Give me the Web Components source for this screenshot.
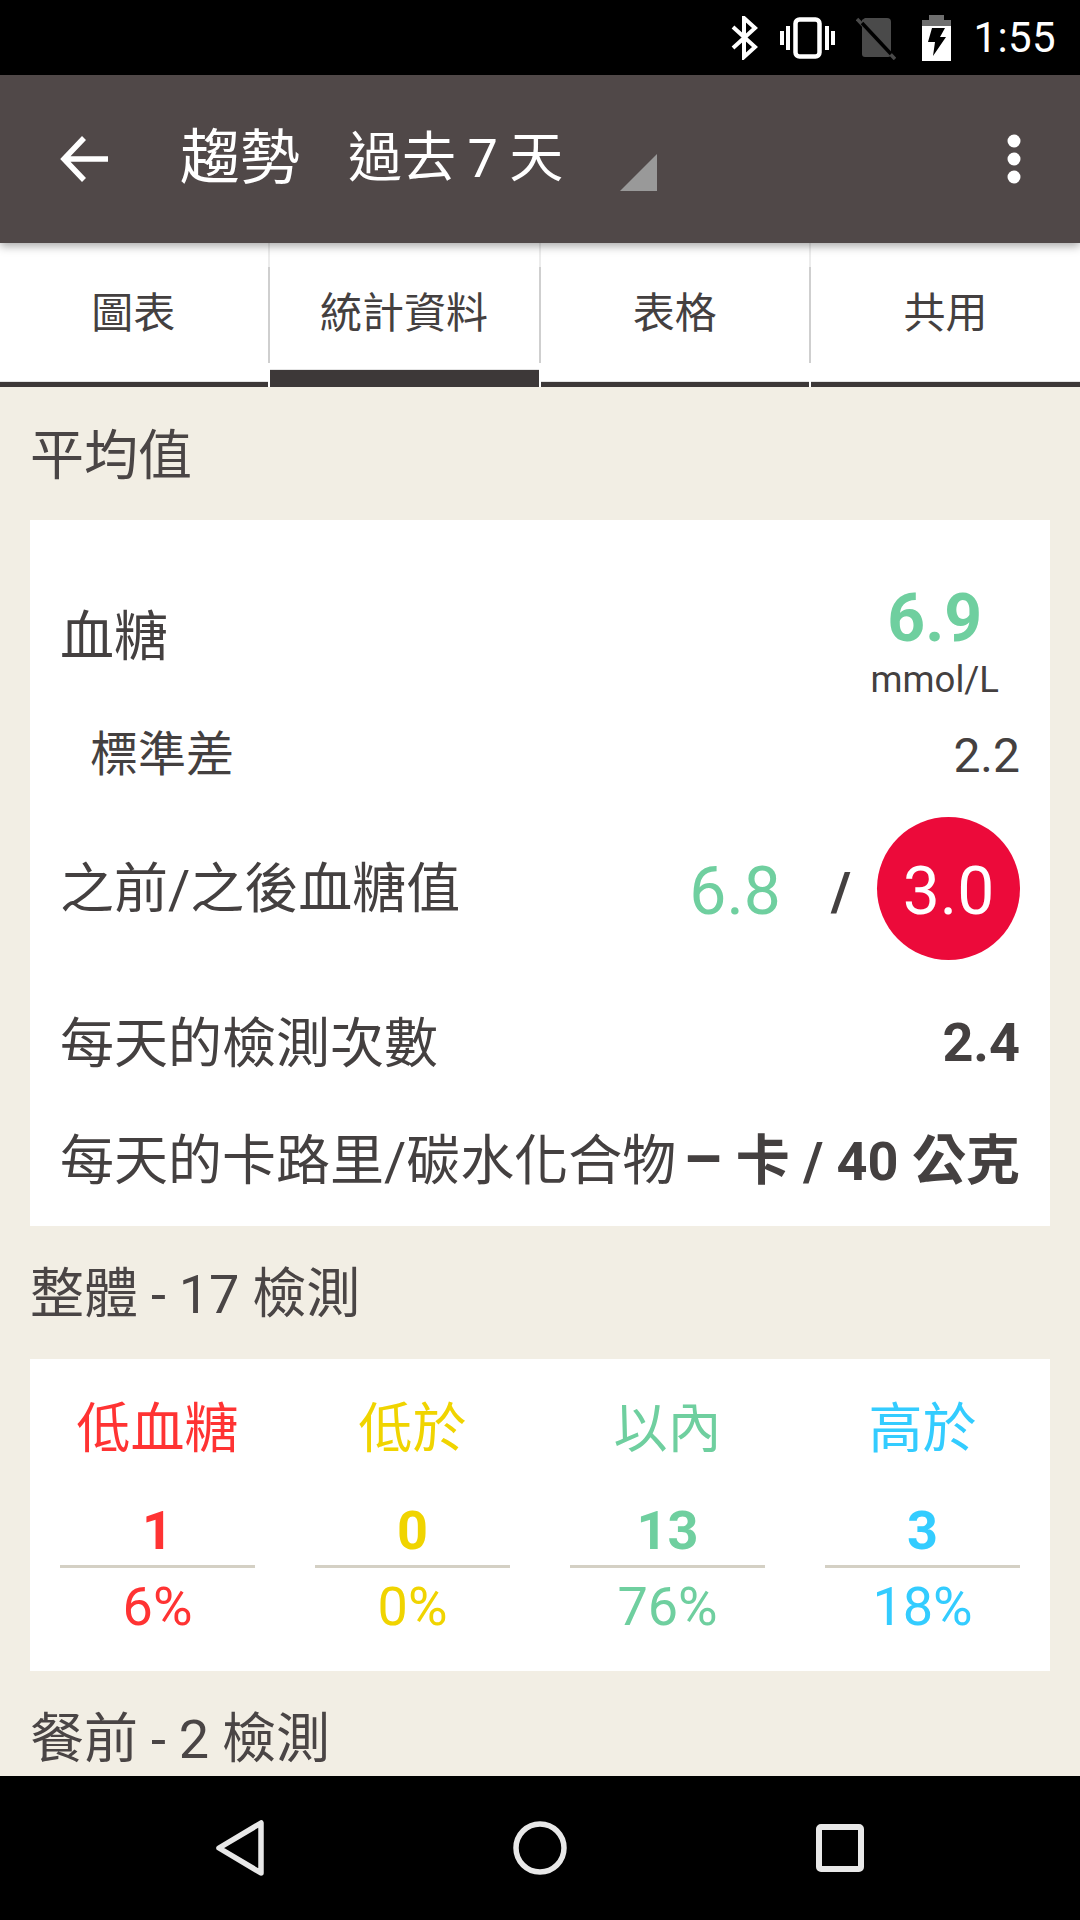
<!DOCTYPE html>
<html>
<head>
<meta charset="utf-8">
<style>
  html, body { margin: 0; padding: 0; }
  body {
    width: 1080px;
    height: 1920px;
    overflow: hidden;
    display: flex;
    flex-direction: column;
    background: #f2eee4;
    color: #444040;
    font-family: Roboto, "Noto Sans CJK TC", sans-serif;
  }
  main { flex: 1; min-height: 0; overflow: hidden; }
</style>
</head>
<body>
<status-bar time="1:55"></status-bar>
<app-toolbar title="趨勢" range="過去 7 天"></app-toolbar>
<tab-strip>
  <tab-item>圖表</tab-item>
  <tab-item active>統計資料</tab-item>
  <tab-item>表格</tab-item>
  <tab-item last>共用</tab-item>
</tab-strip>
<main>
  <section-title large>平均值</section-title>
  <average-card></average-card>
  <section-title>整體 - 17 檢測</section-title>
  <range-card>
    <range-cell color="#ff3333" label="低血糖" count="1" percent="6%"></range-cell>
    <range-cell color="#f0d400" label="低於" count="0" percent="0%"></range-cell>
    <range-cell color="#6fcf9f" label="以內" count="13" percent="76%"></range-cell>
    <range-cell color="#33ccff" label="高於" count="3" percent="18%"></range-cell>
  </range-card>
  <section-title>餐前 - 2 檢測</section-title>
</main>
<nav-bar></nav-bar>

<script>
class StatusBar extends HTMLElement {
  connectedCallback() {
    const shadow = this.attachShadow({ mode: 'open' });
    shadow.innerHTML = `
      <style>
        :host {
          display: flex;
          height: 75px;
          flex: none;
          background: #000;
          color: #fff;
          align-items: center;
          justify-content: flex-end;
          padding-right: 24px;
        }
        svg { display: block; }
        .time { font-size: 42px; line-height: 75px; margin-left: 21px; letter-spacing: 0.4px; }
      </style>
      <svg width="30" height="44" viewBox="0 0 30 44" style="margin-right:20px">
        <path d="M3 11 L25 31 L14 41 V2 L25 12 L3 32" fill="none" stroke="#fff" stroke-width="4"/>
      </svg>
      <svg width="56" height="42" viewBox="0 0 56 42" style="margin-right:20px">
        <rect x="15.5" y="2.5" width="24" height="37" rx="4" fill="none" stroke="#fff" stroke-width="4.5"/>
        <rect x="0" y="14" width="4" height="14" fill="#fff"/>
        <rect x="6" y="9" width="4" height="24" fill="#fff"/>
        <rect x="45" y="9" width="4" height="24" fill="#fff"/>
        <rect x="51" y="14" width="4" height="14" fill="#fff"/>
      </svg>
      <svg width="40" height="44" viewBox="0 0 40 44" style="margin-right:26px">
        <path d="M6 4 L9 2 H31 Q35 2 35 6 V38 Q35 41 32 41 H9 Q6 41 6 38 Z" fill="#4a4a4a"/>
        <path d="M1 3 L39 43" stroke="#4a4a4a" stroke-width="3.5"/>
        <path d="M6 7 L35 38" stroke="#000" stroke-width="3.5"/>
      </svg>
      <svg width="30" height="46" viewBox="0 0 30 46">
        <path d="M7 0 H22 V5 H29 V11 H0 V5 H7 Z" fill="#6f6f6f"/>
        <rect x="0" y="11" width="29" height="35" fill="#fff"/>
        <path d="M10 13 H23 L18 22 H24 L11 41 L13 27 H6 Z" fill="#000"/>
      </svg>
      <span class="time">${this.getAttribute('time')}</span>
    `;
  }
}
customElements.define('status-bar', StatusBar);

class AppToolbar extends HTMLElement {
  connectedCallback() {
    const shadow = this.attachShadow({ mode: 'open' });
    shadow.innerHTML = `
      <style>
        :host {
          display: flex;
          position: relative;
          z-index: 2;
          flex: none;
          height: 168px;
          background: #504848;
          color: #fff;
          align-items: center;
          box-shadow: 0 3px 9px rgba(0,0,0,.35);
        }
        .back { margin-left: 60px; display: block; }
        .title { font-size: 60px; margin-left: 70px; line-height: 170px; }
        .range { font-size: 54px; margin-left: 48px; line-height: 170px; word-spacing: -2px; }
        .arrow { margin-left: 57px; margin-top: 26px; display: block; }
        .more { margin-left: auto; margin-right: 59px; display: block; }
      </style>
      <svg class="back" width="50" height="48" viewBox="0 0 50 48">
        <path d="M48 24 H5 M24 3 L4 24 L24 45" fill="none" stroke="#fff" stroke-width="5.5"/>
      </svg>
      <span class="title">${this.getAttribute('title')}</span>
      <span class="range">${this.getAttribute('range')}</span>
      <svg class="arrow" width="37" height="37" viewBox="0 0 37 37"><path d="M37 0 V37 H0 Z" fill="#999"/></svg>
      <svg class="more" width="14" height="50" viewBox="0 0 14 50">
        <circle cx="7" cy="7" r="6.5" fill="#fff"/><circle cx="7" cy="25" r="6.5" fill="#fff"/><circle cx="7" cy="43" r="6.5" fill="#fff"/>
      </svg>
    `;
  }
}
customElements.define('app-toolbar', AppToolbar);

class TabStrip extends HTMLElement {
  constructor() {
    super();
    const shadow = this.attachShadow({ mode: 'open' });
    shadow.innerHTML = `
      <style>
        :host { display: flex; flex: none; height: 144px; width: 1081px; margin-left: -1px; background: #fff; }
      </style>
      <slot></slot>
    `;
  }
}
customElements.define('tab-strip', TabStrip);

class TabItem extends HTMLElement {
  constructor() {
    super();
    const shadow = this.attachShadow({ mode: 'open' });
    shadow.innerHTML = `
      <style>
        :host {
          display: block;
          position: relative;
          flex: 1;
          min-width: 0;
          box-sizing: border-box;
          border-right: 2px solid #fff;
          font-size: 42px;
          color: #444040;
        }
        :host([last]) { border-right: 0; }
        .body {
          height: 100%;
          box-sizing: border-box;
          display: flex;
          align-items: center;
          justify-content: center;
          padding-bottom: 11px;
        }
        .rule { position: absolute; right: -2px; width: 2px; }
        .rule.faint { top: 0; height: 24px; background: #ececec; }
        .rule.main { top: 24px; height: 96px; background: #cfcfcf; }
        :host([last]) .rule { display: none; }
        .bar {
          position: absolute;
          left: 0;
          right: 0;
          bottom: 0;
          height: 5px;
          background: #3d3838;
          border-top: 1px solid #e4e4e4;
        }
        :host([active]) .bar { height: 17px; }
      </style>
      <div class="body"><slot></slot></div>
      <div class="rule faint"></div>
      <div class="rule main"></div>
      <div class="bar"></div>
    `;
  }
}
customElements.define('tab-item', TabItem);

class SectionTitle extends HTMLElement {
  constructor() {
    super();
    const shadow = this.attachShadow({ mode: 'open' });
    shadow.innerHTML = `
      <style>
        :host {
          display: block;
          height: 133px;
          padding-left: 30px;
          font-size: 54px;
          line-height: 137px;
          word-spacing: -0.5px;
          color: #4a4545;
        }
        :host([large]) { line-height: 140px; }
      </style>
      <slot></slot>
    `;
  }
}
customElements.define('section-title', SectionTitle);

class StatRow extends HTMLElement {
  constructor() {
    super();
    const shadow = this.attachShadow({ mode: 'open' });
    shadow.innerHTML = `
      <style>
        :host {
          display: flex;
          align-items: center;
          justify-content: space-between;
          font-size: 54px;
          white-space: nowrap;
        }
      </style>
      <slot></slot>
    `;
  }
}
customElements.define('stat-row', StatRow);

class AverageCard extends HTMLElement {
  connectedCallback() {
    const shadow = this.attachShadow({ mode: 'open' });
    shadow.innerHTML = `
      <style>
        :host {
          display: block;
          margin: 0 30px;
          height: 706px;
          box-sizing: border-box;
          padding: 0 30px;
          background: #fff;
          color: #444040;
        }
        .glucose { height: 196px; padding-top: 29px; box-sizing: border-box; }
        .glucose-value { display: flex; flex-direction: column; align-items: center; margin: 16px 21px 0 0; }
        .big { font-size: 66px; font-weight: 700; color: #6fcf9f; line-height: 78px; }
        .unit { font-size: 36.5px; line-height: 44px; }
        .dev { height: 76px; padding-left: 30px; font-size: 48px; }
        .dev span { margin-bottom: 8px; }
        .dev b { font-weight: 400; font-size: 48px; margin-top: 3px; }
        .prepost { height: 193px; }
        .prepost > span:first-child { margin-bottom: 8px; }
        .pair { display: flex; align-items: center; font-size: 66px; }
        .before { color: #6fcf9f; padding-top: 6px; }
        .slash { font-weight: 700; font-size: 54px; margin: 0 26px 0 50px; padding-top: 6px; }
        .circle {
          width: 143px;
          height: 143px;
          box-sizing: border-box;
          padding-top: 6px;
          border-radius: 50%;
          background: #ec0a3a;
          color: #fff;
          display: flex;
          align-items: center;
          justify-content: center;
        }
        .count { height: 113px; }
        .count > span { margin-bottom: 4px; }
        .count b { margin-top: 2px; }
        .count b, .carbs b { font-size: 54px; font-weight: 700; }
        .carbs { height: 116px; }
        .dash { font-size: 62px; }
      </style>
      <stat-row class="glucose">
        <span>血糖</span>
        <span class="glucose-value"><span class="big">6.9</span><span class="unit">mmol/L</span></span>
      </stat-row>
      <stat-row class="dev"><span>標準差</span><b>2.2</b></stat-row>
      <stat-row class="prepost">
        <span>之前/之後血糖值</span>
        <span class="pair"><span class="before">6.8</span><span class="slash">/</span><span class="circle">3.0</span></span>
      </stat-row>
      <stat-row class="count"><span>每天的檢測次數</span><b>2.4</b></stat-row>
      <stat-row class="carbs"><span>每天的卡路里/碳水化合物</span><b><span class="dash">–</span> 卡 / 40 公克</b></stat-row>
    `;
  }
}
customElements.define('average-card', AverageCard);

class RangeCard extends HTMLElement {
  constructor() {
    super();
    const shadow = this.attachShadow({ mode: 'open' });
    shadow.innerHTML = `
      <style>
        :host {
          display: grid;
          grid-template-columns: repeat(4, 195px);
          column-gap: 60px;
          margin: 0 30px;
          height: 312px;
          box-sizing: border-box;
          padding: 0 30px;
          background: #fff;
        }
      </style>
      <slot></slot>
    `;
  }
}
customElements.define('range-card', RangeCard);

class RangeCell extends HTMLElement {
  connectedCallback() {
    const shadow = this.attachShadow({ mode: 'open' });
    shadow.innerHTML = `
      <style>
        :host {
          display: block;
          text-align: center;
          color: ${this.getAttribute('color')};
          font-size: 54px;
        }
        .label { line-height: 66px; padding-top: 38px; }
        .count { font-weight: 700; line-height: 64px; margin-top: 36px; }
        .line { height: 3px; background: #d4d0c4; margin-top: 2px; }
        .percent { line-height: 64px; margin-top: 7px; }
      </style>
      <div class="label">${this.getAttribute('label')}</div>
      <div class="count">${this.getAttribute('count')}</div>
      <div class="line"></div>
      <div class="percent">${this.getAttribute('percent')}</div>
    `;
  }
}
customElements.define('range-cell', RangeCell);

class NavBar extends HTMLElement {
  connectedCallback() {
    const shadow = this.attachShadow({ mode: 'open' });
    shadow.innerHTML = `
      <style>
        :host {
          display: block;
          flex: none;
          height: 144px;
          background: #000;
        }
        svg { display: block; }
      </style>
      <svg width="1080" height="144" viewBox="0 0 1080 144">
        <path d="M261 47 V97 L219 72 Z" fill="none" stroke="#e8e8e8" stroke-width="5.5" stroke-linejoin="round"/>
        <circle cx="540" cy="72" r="24" fill="none" stroke="#e8e8e8" stroke-width="5.5"/>
        <rect x="819" y="51" width="42" height="42" rx="2" fill="none" stroke="#e8e8e8" stroke-width="6"/>
      </svg>
    `;
  }
}
customElements.define('nav-bar', NavBar);
</script>
</body>
</html>
